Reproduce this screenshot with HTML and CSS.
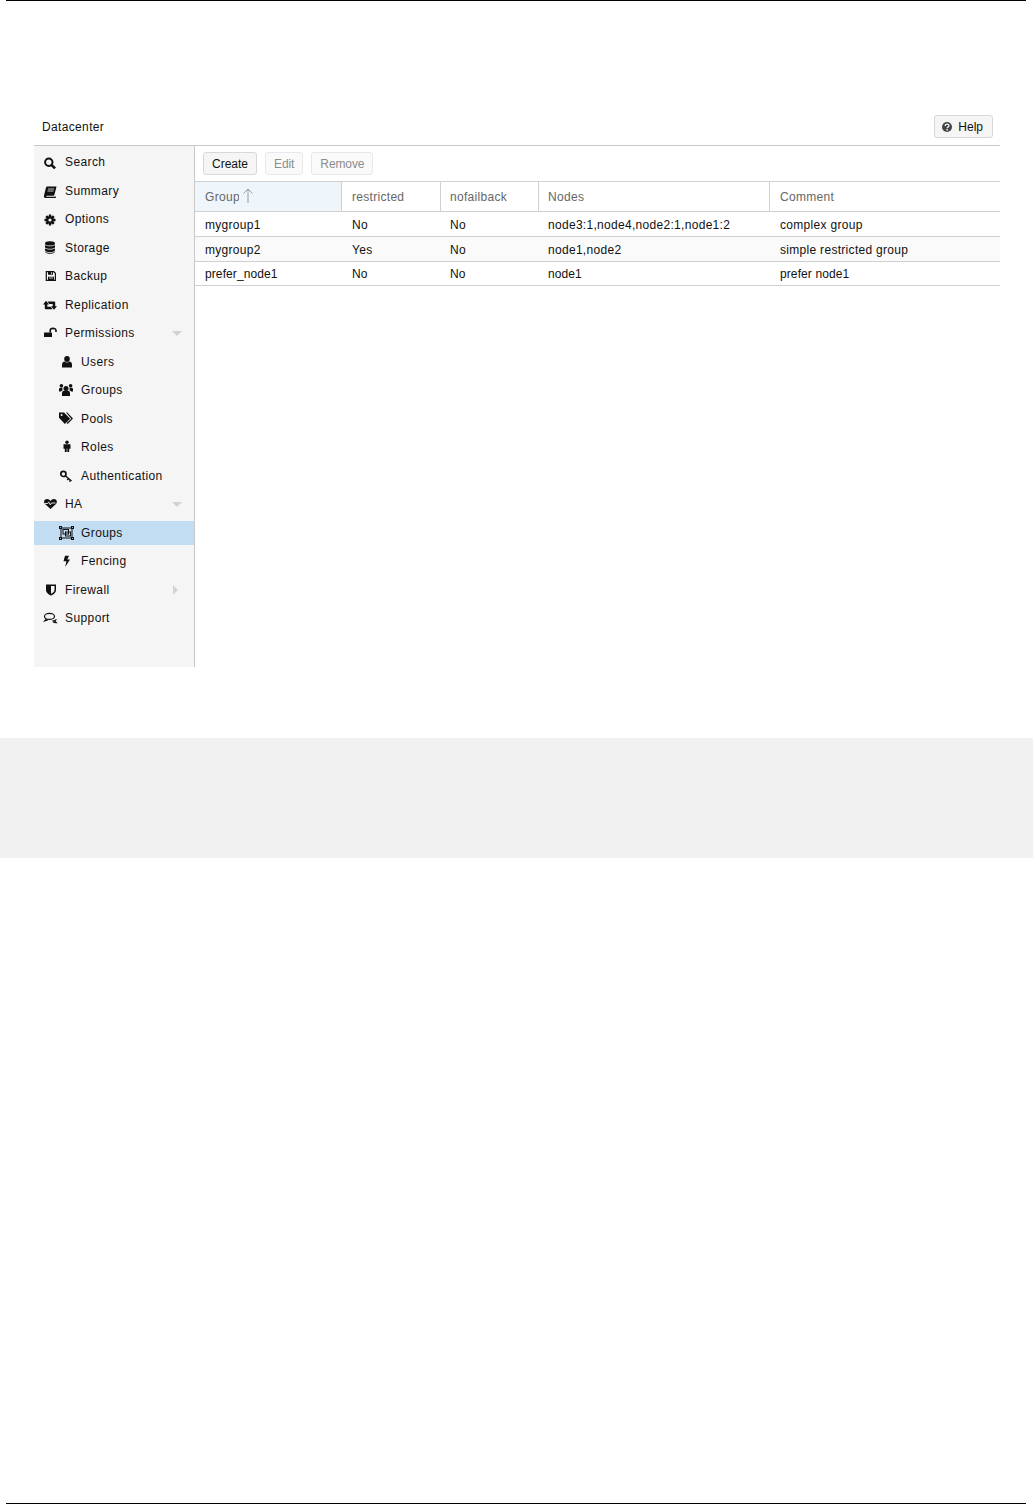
FILE: index.html
```html
<!DOCTYPE html>
<html lang="en">
<head>
  <meta charset="UTF-8">
  <title>HA Groups</title>
  <link rel="stylesheet" href="styles.css">
</head>
<body>
  <div class="page">
    <div class="rule"></div>
    <div class="panel">
      <div class="panel-head">
        <span class="panel-title">Datacenter</span>
        <button class="btn help-btn">
          <svg class="btn-icon" viewBox="0 0 10 10"><circle cx="5" cy="5" r="5" fill="#444"/><path d="M3.200 3.900c0-2.300 3.700-2.200 3.700-.2 0 1.300-1.700 1.200-1.700 2.500" fill="none" stroke="#f5f5f5" stroke-width="1.300"/><rect x="4.400" y="7" width="1.500" height="1.500" fill="#f5f5f5"/></svg>
          Help
        </button>
      </div>
      <div class="panel-body">
        <nav class="sidebar">
          <div class="nav-item"><svg class="nav-icon" viewBox="0 0 16 16"><circle cx="6.800" cy="8.200" r="3.700" fill="none" stroke="#111" stroke-width="2"/><path d="M9.500 11l3.600 3.400" stroke="#111" stroke-width="2.500"/></svg>Search</div>
          <div class="nav-item"><svg class="nav-icon" viewBox="0 0 16 16"><path d="M5.200 3.500H14c.5 0 .4.500.3 1l-1.900 7.200c-.2.700-.5 1-1.200 1H4.800c-.9 0-.9 1 0 1h8.600l.4-1 .2 1.300-.4 1H3.600C2.300 15 1.600 13.800 2 12.500L4 4.600c.2-.7.600-1.100 1.200-1.100z" fill="#111"/><path d="M6 6h6M5.500 8h6" stroke="#f5f5f5" stroke-width=".8"/></svg>Summary</div>
          <div class="nav-item"><svg class="nav-icon" viewBox="0 0 16 16"><path d="M8 3.500v11M2.500 9h11M4.200 5.200l7.600 7.600M11.800 5.200l-7.600 7.600" stroke="#111" stroke-width="2.400"/><circle cx="8" cy="9" r="3.800" fill="#111"/><circle cx="8" cy="9" r="1.600" fill="#f5f5f5"/></svg>Options</div>
          <div class="nav-item"><svg class="nav-icon" viewBox="0 0 16 16"><ellipse cx="8" cy="3.400" rx="5" ry="2.200" fill="#111"/><path d="M3 5c1 1.800 9 1.800 10 0v2.200c-1 2-9 2-10 0zM3 8.200c1 1.800 9 1.800 10 0v2.200c-1 2-9 2-10 0zM3 11.400c1 1.800 9 1.800 10 0v.3c-1 2.800-9 2.800-10 0z" fill="#111"/></svg>Storage</div>
          <div class="nav-item"><svg class="nav-icon" viewBox="0 0 16 16"><path d="M4.300 3.600h7.400l1.700 1.700v7.100H4.300z" fill="none" stroke="#111" stroke-width="1.200"/><path d="M6 3.600h5v3.200H6zM6 8.800h6v3.600H6z" fill="#111"/><path d="M9.500 4.200v2M7 10h4" stroke="#f5f5f5" stroke-width=".8"/></svg>Backup</div>
          <div class="nav-item"><svg class="nav-icon" viewBox="0 0 16 16"><path d="M4 3.800L7 7.500H5.300V9.700H8.800L10.500 12.300H3.800a1 1 0 0 1-1-1V7.500H1z" fill="#111"/><path d="M12 12.800L9 9.200h1.700V7H7.200L5.500 4.400H12.200a1 1 0 0 1 1 1V9.200H15z" fill="#111"/></svg>Replication</div>
          <div class="nav-item"><svg class="nav-icon" viewBox="0 0 16 16"><rect x="2" y="7.500" width="8" height="4.500" rx=".5" fill="#111"/><path d="M8.200 7.500V5.600c0-3 5.800-3 5.800 0v1.400" fill="none" stroke="#111" stroke-width="1.600"/></svg>Permissions<span class="nav-arrow arrow-down"></span></div>
          <div class="nav-item nav-child"><svg class="nav-icon" viewBox="0 0 16 16"><ellipse cx="9" cy="5" rx="2.800" ry="3" fill="#111"/><path d="M4 13.500v-2.700C4 8.500 5.500 7.500 6.500 7.500c1.500 1.200 3.500 1.200 5 0 1 0 2.500 1 2.500 3.300v2.700z" fill="#111"/></svg>Users</div>
          <div class="nav-item nav-child"><svg class="nav-icon" viewBox="0 0 16 16"><circle cx="8" cy="6.600" r="2.500" fill="#111"/><circle cx="3.400" cy="3.800" r="1.800" fill="#111"/><circle cx="12.600" cy="3.800" r="1.800" fill="#111"/><path d="M4 14v-2.800C4 9.500 5 8.700 6 8.700h4c1 0 2 .8 2 2.500V14z" fill="#111"/><path d="M1 9.500V7.300C1 6.300 1.700 5.800 2.400 5.800h2.200c-.3 1-.4 1.900 0 2.600C3.500 8.700 3 9 2.900 9.500zM15 9.500V7.300c0-1-.7-1.500-1.400-1.500h-2.200c.3 1 .4 1.900 0 2.600 1.100.3 1.600.6 1.700 1.100z" fill="#111"/></svg>Groups</div>
          <div class="nav-item nav-child"><svg class="nav-icon" viewBox="0 0 16 16"><path d="M1 1.500h5l6.200 6.200-5.300 5.300L1 6.800z" fill="#111"/><path d="M8 1.500h1.300l5.700 6-5.300 5.500-1-1L13.300 7.700z" fill="#111"/><circle cx="3.600" cy="4.100" r="1" fill="#f5f5f5"/></svg>Pools</div>
          <div class="nav-item nav-child"><svg class="nav-icon" viewBox="0 0 16 16"><circle cx="9" cy="3.200" r="1.700" fill="#111"/><path d="M5.500 5.200h7v4.500h-1.300V13H9.300V9.500h-.6V13H6.800V9.700H5.500z" fill="#111"/></svg>Roles</div>
          <div class="nav-item nav-child"><svg class="nav-icon" viewBox="0 0 16 16"><circle cx="5.400" cy="5.900" r="2.600" fill="none" stroke="#111" stroke-width="1.700"/><path d="M7.500 8l6 5M10.500 10.500l-1.200 1.500M12.500 12.200l-1 1.500" stroke="#111" stroke-width="1.500"/></svg>Authentication</div>
          <div class="nav-item"><svg class="nav-icon" viewBox="0 0 16 16"><path d="M8.500 13L3 8C1.200 6.200 2.300 3 5 3c1.500 0 2.800.8 3.500 2C9.200 3.800 10.500 3 12 3c2.700 0 3.800 3.200 2 5z" fill="#111"/><path d="M2.500 7.500h3.200l1-1.600 1.600 3 1.200-1.900h4" fill="none" stroke="#f5f5f5" stroke-width=".9"/></svg>HA<span class="nav-arrow arrow-down"></span></div>
          <div class="nav-item nav-child nav-selected"><svg class="nav-icon" viewBox="0 0 16 16"><g fill="none" stroke="#111" stroke-width="1"><rect x="3" y="3" width="11" height="10"/><rect x="5" y="4.500" width="5.500" height="4.500"/><rect x="7.500" y="7" width="5" height="4"/><rect x="1.500" y="1.500" width="2" height="2"/><rect x="13.500" y="1.500" width="2" height="2"/><rect x="1.500" y="12.500" width="2" height="2"/><rect x="13.500" y="12.500" width="2" height="2"/></g></svg>Groups</div>
          <div class="nav-item nav-child"><svg class="nav-icon" viewBox="0 0 16 16"><path d="M7 2.700h4L9.300 6.500H12L7.200 14l1.200-5.700H5.500z" fill="#111"/></svg>Fencing</div>
          <div class="nav-item"><svg class="nav-icon" viewBox="0 0 16 16"><path d="M4 2.500h10v5.500c0 3-3 4.800-5 5.500-2-.7-5-2.500-5-5.500z" fill="#111"/><path d="M9 4h3.500v4c0 1.700-2 3.200-3.500 3.800z" fill="#f5f5f5"/></svg>Firewall<span class="nav-arrow arrow-right"></span></div>
          <div class="nav-item"><svg class="nav-icon" viewBox="0 0 16 16"><g fill="none" stroke="#111" stroke-width="1.200"><ellipse cx="7.500" cy="6.400" rx="5" ry="3"/><path d="M10.500 10.800c1.800.2 3.300-.3 3.900-1.500"/><path d="M4.300 9l-1.500 1.800 3-.9"/><path d="M12.500 11l1.800 1.700c-1 .1-2.300-.2-3.300-.9"/></g></svg>Support</div>
        </nav>
        <main class="content">
          <div class="toolbar">
            <button class="btn">Create</button>
            <button class="btn btn-off">Edit</button>
            <button class="btn btn-off">Remove</button>
          </div>
          <table class="grid">
            <colgroup>
              <col class="col-group"><col class="col-restricted"><col class="col-nofailback"><col class="col-nodes"><col>
            </colgroup>
            <thead>
              <tr>
                <th class="sorted"><span class="sort-wrap"><span class="sort-label">Group</span><svg class="sort-icon" viewBox="0 0 10 15"><path d="M5 15V1M.5 5.500L5 1l4.500 4.500" fill="none" stroke="#9a9a9a" stroke-width="1"/></svg></span></th>
                <th>restricted</th>
                <th>nofailback</th>
                <th>Nodes</th>
                <th>Comment</th>
              </tr>
            </thead>
            <tbody>
              <tr><td>mygroup1</td><td>No</td><td>No</td><td>node3:1,node4,node2:1,node1:2</td><td>complex group</td></tr>
              <tr class="alt"><td>mygroup2</td><td>Yes</td><td>No</td><td>node1,node2</td><td>simple restricted group</td></tr>
              <tr class="last"><td>prefer_node1</td><td>No</td><td>No</td><td>node1</td><td>prefer node1</td></tr>
            </tbody>
          </table>
        </main>
      </div>
    </div>
    <div class="band"></div>
    <div class="rule rule-end"></div>
  </div>
</body>
</html>
```

FILE: styles.css
```css
html, body {
  margin: 0;
  background: #fff;
  font-family: "Liberation Sans", Arial, sans-serif;
  font-size: 12px;
  color: #111;
}
.page {
  height: 1504px;
  display: flex;
  flex-direction: column;
}
.rule {
  height: 1px;
  margin: 0 7px 0 6px;
  background: #000;
  flex-shrink: 0;
}
.rule-end {
  margin-top: auto;
}
.panel {
  margin: 114px 33px 0 34px;
}
.panel-head {
  height: 30px;
  border-bottom: 1px solid #c8c8c8;
  display: flex;
  align-items: flex-start;
  justify-content: space-between;
  padding: 0 7px 0 8px;
}
.panel-title {
  letter-spacing: .35px;
  line-height: 24px;
}
.panel-body {
  display: flex;
  height: 521px;
}
.sidebar {
  width: 160px;
  background: #f5f5f5;
  border-right: 1px solid #c8c8c8;
  display: flex;
  flex-direction: column;
  gap: 4.5px;
  padding-top: 4px;
  flex-shrink: 0;
}
.nav-item {
  height: 24px;
  display: flex;
  align-items: center;
  padding-left: 8px;
  letter-spacing: .4px;
  position: relative;
  flex-shrink: 0;
}
.nav-child {
  padding-left: 24px;
}
.nav-selected {
  background: #c2ddf2;
}
.nav-icon {
  width: 16px;
  height: 16px;
  margin-right: 7px;
  flex-shrink: 0;
}
.nav-arrow {
  position: absolute;
  width: 0;
  height: 0;
}
.arrow-down {
  right: 12px;
  top: 10px;
  border-left: 5px solid transparent;
  border-right: 5px solid transparent;
  border-top: 5px solid #d3d3d3;
}
.arrow-right {
  right: 16px;
  top: 7px;
  border-top: 5px solid transparent;
  border-bottom: 5px solid transparent;
  border-left: 5px solid #d3d3d3;
}
.content {
  flex: 1;
  min-width: 0;
}
.toolbar {
  height: 35px;
  box-sizing: border-box;
  padding: 6px 8px 0;
  display: flex;
  gap: 8px;
  align-items: flex-start;
}
.btn {
  height: 23px;
  box-sizing: border-box;
  padding: 0 8px;
  background: #f5f5f5;
  border: 1px solid #d8d8d8;
  border-radius: 3px;
  font: inherit;
  color: #111;
  display: inline-flex;
  align-items: center;
}
.btn-off {
  color: #8c8c8c;
  background: #fafafa;
  border-color: #e8e8e8;
  letter-spacing: -.1px;
}
.help-btn {
  padding: 0 9px 0 7px;
}
.btn-icon {
  width: 10px;
  height: 10px;
  margin-right: 6px;
}
.grid {
  width: 100%;
  table-layout: fixed;
  border-collapse: separate;
  border-spacing: 0;
}
.col-group { width: 147px; }
.col-restricted { width: 99px; }
.col-nofailback { width: 98px; }
.col-nodes { width: 231px; }
.grid th {
  height: 31px;
  padding: 0 10px;
  box-sizing: border-box;
  font-weight: normal;
  text-align: left;
  color: #666;
  letter-spacing: .3px;
  border-top: 1px solid #d0d0d0;
  border-bottom: 1px solid #d0d0d0;
  border-right: 1px solid #d0d0d0;
}
.grid th:last-child {
  border-right: 0;
}
.grid th:nth-child(3), .grid th:nth-child(4),
.grid td:nth-child(3), .grid td:nth-child(4) {
  padding-left: 9px;
}
.grid th.sorted {
  background: #eef5fb;
}
.sort-wrap {
  display: flex;
  align-items: center;
  gap: 4px;
}
.sort-label {
  width: 34px;
  overflow: hidden;
}
.sort-icon {
  width: 10px;
  height: 15px;
  margin-top: -2px;
}
.grid td {
  height: 25px;
  padding: 2px 10px 0;
  box-sizing: border-box;
  letter-spacing: .3px;
  border-bottom: 1px solid #d0d0d0;
  white-space: nowrap;
}
.grid tr.last td {
  height: 24px;
  padding-top: 0;
  letter-spacing: .1px;
}
.grid tr.alt td {
  background: #fafafa;
}
.band {
  margin-top: 71px;
  height: 120px;
  background: #f1f1f1;
  flex-shrink: 0;
}
```
